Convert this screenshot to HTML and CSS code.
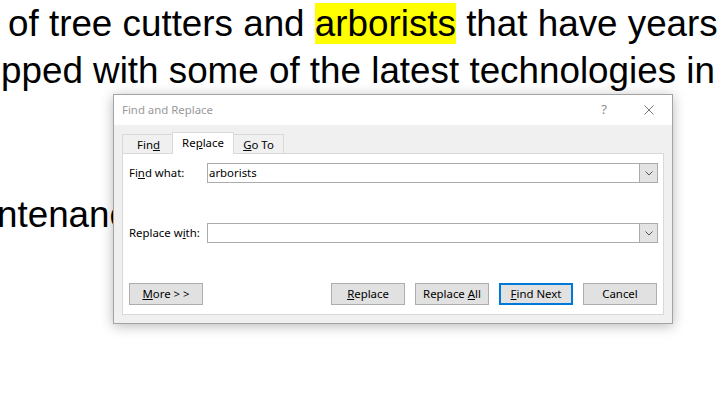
FILE: index.html
```html
<!DOCTYPE html>
<html lang="en">
<head>
    <meta charset="UTF-8">
    <meta name="viewport" content="width=device-width, initial-scale=1.0">
    <title>Find and Replace</title>
    <link rel="stylesheet" href="styles.css">
</head>
<body>
    <div class="doc">
        <p class="line line-1">of tree cutters and <span class="hl">arborists</span> that have years</p>
        <p class="line line-2">pped with some of the latest technologies in</p>
        <p class="line line-3">ntenance</p>
    </div>

    <div class="dialog">
        <div class="titlebar">
            <span class="title">Find and Replace</span>
            <span class="help">?</span>
            <svg class="close" width="10" height="10" viewBox="0 0 10 10">
                <path d="M0.5 0.5 L9.5 9.5 M9.5 0.5 L0.5 9.5" stroke="#777" stroke-width="1" fill="none"/>
            </svg>
        </div>
        <div class="body">
            <div class="tabs">
                <div class="tab tab-find">Fin<u>d</u></div>
                <div class="tab tab-active">Re<u>p</u>lace</div>
                <div class="tab tab-goto"><u>G</u>o To</div>
            </div>
            <div class="panel">
                <div class="row">
                    <span class="label">Fi<u>n</u>d what:</span>
                    <div class="combo">
                        <span class="combo-text">arborists</span>
                        <span class="arrow">
                            <svg width="8" height="5" viewBox="0 0 8 5">
                                <path d="M0.5 0.5 L4 4 L7.5 0.5" stroke="#555" stroke-width="1" fill="none"/>
                            </svg>
                        </span>
                    </div>
                </div>
                <div class="row row-replace">
                    <span class="label">Replace w<u>i</u>th:</span>
                    <div class="combo">
                        <span class="combo-text"></span>
                        <span class="arrow">
                            <svg width="8" height="5" viewBox="0 0 8 5">
                                <path d="M0.5 0.5 L4 4 L7.5 0.5" stroke="#555" stroke-width="1" fill="none"/>
                            </svg>
                        </span>
                    </div>
                </div>
                <div class="buttons">
                    <button class="btn"><u>M</u>ore &gt; &gt;</button>
                    <div class="spacer"></div>
                    <button class="btn"><u>R</u>eplace</button>
                    <button class="btn">Replace <u>A</u>ll</button>
                    <button class="btn btn-default"><u>F</u>ind Next</button>
                    <button class="btn">Cancel</button>
                </div>
            </div>
        </div>
    </div>
</body>
</html>
```

FILE: styles.css
```css
body {
    margin: 0;
    background: #fff;
    overflow: hidden;
    height: 395px;
}
.doc {
    font-family: 'Liberation Sans', Arial, sans-serif;
    font-size: 36.8px;
    line-height: 47px;
    color: #000;
    white-space: nowrap;
}
.line {
    margin: 0;
}
.line-1 {
    padding-left: 8px;
}
.line-2 {
    padding-left: 1px;
}
.line-3 {
    margin-top: 97px;
    margin-left: -3px;
}
.hl {
    background: #ffff00;
}

.dialog {
    position: absolute;
    left: 113px;
    top: 94px;
    width: 560px;
    height: 230px;
    box-sizing: border-box;
    border: 1px solid #a3a3a3;
    background: #f0f0f0;
    box-shadow: 0 2px 12px rgba(0, 0, 0, 0.28);
    font-family: 'Segoe UI', 'Noto Sans', sans-serif;
    font-size: 11.4px;
    color: #000;
    display: flex;
    flex-direction: column;
}
.titlebar {
    height: 30px;
    box-sizing: border-box;
    padding-bottom: 2px;
    background: #fff;
    display: flex;
    align-items: center;
    padding-left: 8px;
}
.title {
    flex: 1;
    color: #999;
}
.help {
    color: #8c8c8c;
    font-size: 13px;
    margin-right: 37px;
}
.close {
    margin-right: 18px;
    margin-top: 2px;
}
.body {
    flex: 1;
    padding: 7px 8px 8px 8px;
    display: flex;
    flex-direction: column;
}
.tabs {
    display: flex;
    align-items: flex-end;
    height: 21px;
    position: relative;
    z-index: 1;
}
.tab {
    box-sizing: border-box;
    height: 19px;
    border-top: 1px solid #d9d9d9;
    display: flex;
    align-items: center;
    justify-content: center;
    background: #f0f0f0;
}
.tab-find {
    width: 50px;
    border-left: 1px solid #d9d9d9;
    padding-left: 2px;
}
.tab-active {
    width: 62px;
    height: 22px;
    margin-bottom: -1px;
    background: #fff;
    border-left: 1px solid #d9d9d9;
    border-right: 1px solid #d9d9d9;
    padding-bottom: 3px;
}
.tab-goto {
    width: 50px;
    border-right: 1px solid #d9d9d9;
}
.panel {
    flex: 1;
    background: #fff;
    border: 1px solid #d9d9d9;
    padding: 9px 5px 9px 6px;
    display: flex;
    flex-direction: column;
}
.row {
    display: grid;
    grid-template-columns: 78px 1fr;
    align-items: center;
    height: 20px;
}
.label {
    padding-bottom: 1px;
}
.row-replace {
    margin-top: 40px;
}
.combo {
    box-sizing: border-box;
    height: 20px;
    border: 1px solid #ababab;
    display: flex;
    align-items: center;
}
.combo-text {
    flex: 1;
    padding-left: 1px;
    padding-bottom: 1px;
}
.arrow {
    width: 17px;
    height: 18px;
    background: #e3e3e3;
    border-left: 1px solid #ababab;
    display: flex;
    align-items: center;
    justify-content: center;
}
.buttons {
    display: flex;
    gap: 10px;
    margin-top: 40px;
    padding-right: 1px;
}
.spacer {
    flex: 1;
}
.btn {
    box-sizing: border-box;
    width: 74px;
    height: 22px;
    padding: 0 0 2px;
    border: 1px solid #adadad;
    background: #e1e1e1;
    font-family: inherit;
    font-size: 11.4px;
    color: #000;
}
.btn-default {
    border: 2px solid #0078d7;
}
```
